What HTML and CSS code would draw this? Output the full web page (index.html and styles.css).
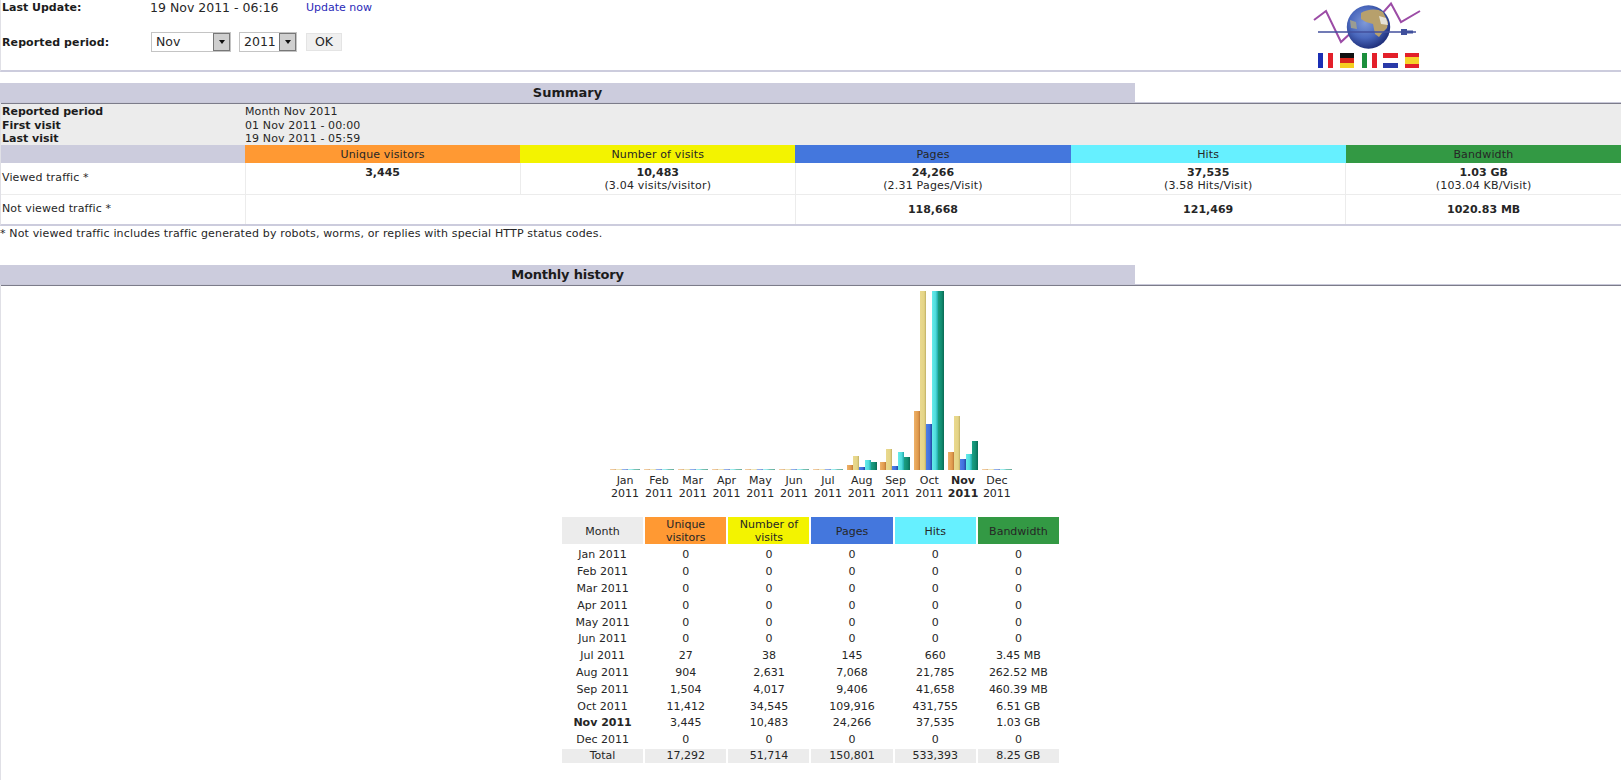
FILE: index.html
```html
<!DOCTYPE html>
<html lang="en">
<head>
<meta charset="utf-8">
<title>Statistics</title>
<link rel="stylesheet" href="styles.css">
</head>
<body>
<header class="top">
  <form class="period">
    <b class="plabel">Last Update:</b>
    <div class="pvalue">
      <span class="date">19 Nov 2011 - 06:16</span>
      <a class="update" href="#">Update now</a>
    </div>
    <b class="plabel plabel-low">Reported period:</b>
    <div class="pvalue controls">
      <span class="sel sel-month"><select><option>Nov</option></select><i class="drop"></i></span>
      <span class="sel sel-year"><select><option>2011</option></select><i class="drop"></i></span>
      <button type="button" class="ok">OK</button>
    </div>
  </form>
  <svg class="logo" width="115" height="70" viewBox="0 0 115 70" aria-hidden="true">
    <defs>
      <radialGradient id="globe" cx="0.42" cy="0.4" r="0.64">
        <stop offset="0" stop-color="#7f99d8"/>
        <stop offset="0.55" stop-color="#4a68bd"/>
        <stop offset="1" stop-color="#1b2a74"/>
      </radialGradient>
      <filter id="soft" x="-10%" y="-10%" width="120%" height="120%"><feGaussianBlur stdDeviation="0.6"/></filter>
    </defs>
    <polyline points="3,20 15,11 30,42 43,30 62,24 80,3.5 90,22 109,11" fill="none" stroke="#9c4ca6" stroke-width="2"/>
    <circle cx="57.5" cy="27" r="21.7" fill="url(#globe)"/>
    <g filter="url(#soft)">
      <path d="M50 13 C56 9 66 8 72 12 L77 22 L76 28 L71 33 L68 37 L64 34 L62 24 L55 22 L50 19 Z" fill="#b7a06c"/>
      <path d="M68 16 L75 18 L77 25 L70 24 Z" fill="#e6e2d6"/>
      <path d="M39 20 L45 22 L46 29 L40 28 Z" fill="#9a9c92"/>
    </g>
    <path d="M7 32 H96" stroke="#424f9c" stroke-width="1.6"/>
    <path d="M90 29 H96 V30.5 H102 V33.5 H96 V35 H90 Z" fill="#3f4f9c"/>
    <path d="M102 32 H105" stroke="#424f9c" stroke-width="1.5"/>
    <rect x="7" y="53" width="5" height="15" fill="#1b2fb4"/><rect x="12" y="53" width="5" height="15" fill="#fff"/><rect x="17" y="53" width="5" height="15" fill="#e3202a"/>
    <rect x="29" y="53" width="14" height="5" fill="#111"/><rect x="29" y="58" width="14" height="5" fill="#d8261c"/><rect x="29" y="63" width="14" height="5" fill="#f5cf20"/>
    <rect x="51" y="53" width="5" height="15" fill="#1c8f3c"/><rect x="56" y="53" width="5" height="15" fill="#fff"/><rect x="61" y="53" width="5" height="15" fill="#e3202a"/>
    <rect x="72" y="53" width="15" height="5" fill="#e3202a"/><rect x="72" y="58" width="15" height="5" fill="#fff"/><rect x="72" y="63" width="15" height="5" fill="#2a3aa8"/>
    <rect x="94" y="53" width="14" height="4" fill="#e3202a"/><rect x="94" y="57" width="14" height="7" fill="#f6d32a"/><rect x="94" y="64" width="14" height="4" fill="#e3202a"/>
  </svg>
</header>

<h2 class="title title-first">Summary</h2>
<section class="box">
  <table class="summary">
    <colgroup><col class="c-first"><col class="c-col"><col class="c-col"><col class="c-col"><col class="c-col"><col class="c-col"></colgroup>
    <tr class="info info-a"><th>Reported period</th><td colspan="5">Month Nov 2011</td></tr>
    <tr class="info info-b"><th>First visit</th><td colspan="5">01 Nov 2011 - 00:00</td></tr>
    <tr class="info info-c"><th>Last visit</th><td colspan="5">19 Nov 2011 - 05:59</td></tr>
    <tr class="heads">
      <td class="h-blank"></td>
      <td class="h-u">Unique visitors</td>
      <td class="h-v">Number of visits</td>
      <td class="h-p">Pages</td>
      <td class="h-h">Hits</td>
      <td class="h-b">Bandwidth</td>
    </tr>
    <tr class="data data-top">
      <td class="rowname">Viewed traffic *</td>
      <td><b>3,445</b></td>
      <td><b>10,483</b>(3.04 visits/visitor)</td>
      <td><b>24,266</b>(2.31 Pages/Visit)</td>
      <td><b>37,535</b>(3.58 Hits/Visit)</td>
      <td><b>1.03 GB</b>(103.04 KB/Visit)</td>
    </tr>
    <tr class="data data-mid">
      <td class="rowname">Not viewed traffic *</td>
      <td colspan="2"></td>
      <td><b>118,668</b></td>
      <td><b>121,469</b></td>
      <td><b>1020.83 MB</b></td>
    </tr>
  </table>
</section>
<p class="note">* Not viewed traffic includes traffic generated by robots, worms, or replies with special HTTP status codes.</p>

<h2 class="title title-second">Monthly history</h2>
<section class="box box-last">
  <div class="chart">
    <div class="month empty"><div class="bars"><i class="bar b-u" style="height:1px"></i><i class="bar b-v" style="height:1px"></i><i class="bar b-p" style="height:1px"></i><i class="bar b-h" style="height:1px"></i><i class="bar b-k" style="height:1px"></i></div><span>Jan<br>2011</span></div>
    <div class="month empty"><div class="bars"><i class="bar b-u" style="height:1px"></i><i class="bar b-v" style="height:1px"></i><i class="bar b-p" style="height:1px"></i><i class="bar b-h" style="height:1px"></i><i class="bar b-k" style="height:1px"></i></div><span>Feb<br>2011</span></div>
    <div class="month empty"><div class="bars"><i class="bar b-u" style="height:1px"></i><i class="bar b-v" style="height:1px"></i><i class="bar b-p" style="height:1px"></i><i class="bar b-h" style="height:1px"></i><i class="bar b-k" style="height:1px"></i></div><span>Mar<br>2011</span></div>
    <div class="month empty"><div class="bars"><i class="bar b-u" style="height:1px"></i><i class="bar b-v" style="height:1px"></i><i class="bar b-p" style="height:1px"></i><i class="bar b-h" style="height:1px"></i><i class="bar b-k" style="height:1px"></i></div><span>Apr<br>2011</span></div>
    <div class="month empty"><div class="bars"><i class="bar b-u" style="height:1px"></i><i class="bar b-v" style="height:1px"></i><i class="bar b-p" style="height:1px"></i><i class="bar b-h" style="height:1px"></i><i class="bar b-k" style="height:1px"></i></div><span>May<br>2011</span></div>
    <div class="month empty"><div class="bars"><i class="bar b-u" style="height:1px"></i><i class="bar b-v" style="height:1px"></i><i class="bar b-p" style="height:1px"></i><i class="bar b-h" style="height:1px"></i><i class="bar b-k" style="height:1px"></i></div><span>Jun<br>2011</span></div>
    <div class="month empty"><div class="bars"><i class="bar b-u" style="height:1px"></i><i class="bar b-v" style="height:1px"></i><i class="bar b-p" style="height:1px"></i><i class="bar b-h" style="height:1px"></i><i class="bar b-k" style="height:1px"></i></div><span>Jul<br>2011</span></div>
    <div class="month"><div class="bars"><i class="bar b-u" style="height:5px"></i><i class="bar b-v" style="height:14px"></i><i class="bar b-p" style="height:3px"></i><i class="bar b-h" style="height:10px"></i><i class="bar b-k" style="height:8px"></i></div><span>Aug<br>2011</span></div>
    <div class="month"><div class="bars"><i class="bar b-u" style="height:8px"></i><i class="bar b-v" style="height:21px"></i><i class="bar b-p" style="height:4px"></i><i class="bar b-h" style="height:18px"></i><i class="bar b-k" style="height:13px"></i></div><span>Sep<br>2011</span></div>
    <div class="month"><div class="bars"><i class="bar b-u" style="height:59px"></i><i class="bar b-v" style="height:179px"></i><i class="bar b-p" style="height:46px"></i><i class="bar b-h" style="height:179px"></i><i class="bar b-k" style="height:179px"></i></div><span>Oct<br>2011</span></div>
    <div class="month"><div class="bars"><i class="bar b-u" style="height:18px"></i><i class="bar b-v" style="height:54px"></i><i class="bar b-p" style="height:11px"></i><i class="bar b-h" style="height:16px"></i><i class="bar b-k" style="height:29px"></i></div><span><b>Nov<br>2011</b></span></div>
    <div class="month empty"><div class="bars"><i class="bar b-u" style="height:1px"></i><i class="bar b-v" style="height:1px"></i><i class="bar b-p" style="height:1px"></i><i class="bar b-h" style="height:1px"></i><i class="bar b-k" style="height:1px"></i></div><span>Dec<br>2011</span></div>
  </div>
  <table class="history">
    <thead>
      <tr>
        <th class="h-m">Month</th>
        <th class="h-u">Unique<br>visitors</th>
        <th class="h-v">Number of<br>visits</th>
        <th class="h-p">Pages</th>
        <th class="h-h">Hits</th>
        <th class="h-b">Bandwidth</th>
      </tr>
    </thead>
    <tbody>
      <tr class="first-row"><td>Jan 2011</td><td>0</td><td>0</td><td>0</td><td>0</td><td>0</td></tr>
      <tr><td>Feb 2011</td><td>0</td><td>0</td><td>0</td><td>0</td><td>0</td></tr>
      <tr><td>Mar 2011</td><td>0</td><td>0</td><td>0</td><td>0</td><td>0</td></tr>
      <tr><td>Apr 2011</td><td>0</td><td>0</td><td>0</td><td>0</td><td>0</td></tr>
      <tr><td>May 2011</td><td>0</td><td>0</td><td>0</td><td>0</td><td>0</td></tr>
      <tr class="short"><td>Jun 2011</td><td>0</td><td>0</td><td>0</td><td>0</td><td>0</td></tr>
      <tr><td>Jul 2011</td><td>27</td><td>38</td><td>145</td><td>660</td><td>3.45 MB</td></tr>
      <tr><td>Aug 2011</td><td>904</td><td>2,631</td><td>7,068</td><td>21,785</td><td>262.52 MB</td></tr>
      <tr><td>Sep 2011</td><td>1,504</td><td>4,017</td><td>9,406</td><td>41,658</td><td>460.39 MB</td></tr>
      <tr><td>Oct 2011</td><td>11,412</td><td>34,545</td><td>109,916</td><td>431,755</td><td>6.51 GB</td></tr>
      <tr class="short"><td><b>Nov 2011</b></td><td>3,445</td><td>10,483</td><td>24,266</td><td>37,535</td><td>1.03 GB</td></tr>
      <tr><td>Dec 2011</td><td>0</td><td>0</td><td>0</td><td>0</td><td>0</td></tr>
    </tbody>
    <tfoot>
      <tr><td>Total</td><td>17,292</td><td>51,714</td><td>150,801</td><td>533,393</td><td>8.25 GB</td></tr>
    </tfoot>
  </table>
</section>
</body>
</html>
```

FILE: styles.css
```css
* { box-sizing: border-box; }

html, body {
  margin: 0;
  height: 780px;
  overflow: hidden;
}

body {
  background: #fff;
  color: #262626;
  font-family: "DejaVu Sans", Verdana, sans-serif;
  font-size: 11px;
  line-height: 14px;
}

/* Top block */
.top {
  display: flex;
  height: 72px;
  border-left: 1px solid #e0e0e6;
  border-bottom: 2px solid #ccccdd;
}

.period {
  flex: 1;
  display: grid;
  grid-template-columns: 148px 1fr;
  grid-template-rows: 16px 20px;
  row-gap: 16px;
  align-items: center;
  padding-left: 1px;
}

.plabel { color: #1c1c1c; }
.plabel-low { padding-top: 2px; letter-spacing: 0.1px; }

.pvalue {
  display: flex;
  align-items: center;
  font-size: 12.5px;
}

.date { width: 156px; }

.update {
  font-size: 11px;
  color: #2a2ab8;
  text-decoration: none;
}

.controls { margin-left: 1px; }

.sel {
  display: inline-flex;
  height: 20px;
  border: 1px solid #c4c4c4;
  background: #fff;
}

.sel-month { width: 80px; margin-right: 8px; }
.sel-year { width: 58px; margin-right: 9px; }

.sel select {
  appearance: none;
  flex: 1;
  min-width: 0;
  border: 0;
  padding: 0 0 0 4px;
  background: transparent;
  color: #262626;
  font: inherit;
}

.drop {
  display: flex;
  flex: none;
  align-items: center;
  justify-content: center;
  width: 17px;
  background: #cfcfcf;
  border: 1px solid #777;
}

.drop::before {
  content: "";
  border-top: 4px solid #111;
  border-left: 3.5px solid transparent;
  border-right: 3.5px solid transparent;
}

.ok {
  width: 36px;
  height: 18px;
  padding: 0;
  border: 1px solid #e4e4e4;
  background: #f0f0f0;
  color: #262626;
  font: inherit;
}

.logo {
  flex: none;
  margin-right: 195px;
}

/* Section titles and boxes */
.title {
  width: 1135px;
  height: 19px;
  margin: 0;
  background: #ccccdd;
  color: #1c1c1c;
  font-size: 13px;
  line-height: 20px;
  text-align: center;
}

.title-first { margin-top: 11px; }
.title-second { margin-top: 24px; letter-spacing: -0.2px; }

.box {
  border-top: 1px solid #c8c8d8;
  border-left: 1px solid #e0e0e6;
  border-bottom: 2px solid #ccccdd;
  padding-top: 1px;
  box-shadow: inset 0 1px 0 #7c7c8a;
}

.box-last {
  height: 496px;
  border-bottom: 0;
}

/* Summary table */
.summary {
  width: 1620px;
  table-layout: fixed;
  border-collapse: collapse;
}

.c-first { width: 244px; }
.c-col { width: 275.2px; }

.summary th,
.summary td { padding: 0; }

.info { background: #ececec; }
.info th { padding-left: 1px; text-align: left; color: #1c1c1c; }
.info td { letter-spacing: 0.12px; }
.summary .info-a th, .summary .info-a td { height: 14.67px; padding-top: 1px; line-height: 13.67px; }
.info-b th, .info-b td { height: 14px; line-height: 14px; }
.info-c th, .info-c td { height: 12.33px; line-height: 12.33px; }

.summary .heads td {
  height: 18px;
  padding-top: 1px;
  line-height: 16px;
  text-align: center;
  letter-spacing: 0.15px;
}

.h-blank { background: #ccccdd; }
.h-m { background: #ececec; }
.h-u { background: #ff9933; }
.h-v { background: #f3f300; }
.h-p { background: #4477dd; }
.h-h { background: #66f0ff; }
.h-b { background: #339944; }

.data td {
  border-left: 1px solid #ececec;
  border-bottom: 1px solid #ececec;
  text-align: center;
}

.data b {
  display: block;
  line-height: 13px;
  letter-spacing: 0;
}

.summary .data .rowname {
  border-left: 0;
  padding-left: 1px;
  padding-top: 0;
  text-align: left;
  letter-spacing: 0.12px;
  vertical-align: middle;
}

.summary .data-top td { height: 31px; vertical-align: top; padding-top: 3px; letter-spacing: 0.2px; }
.data-mid td { height: 30px; border-bottom: 0; }

.note { margin: 0; padding-top: 1px; letter-spacing: 0.15px; }

/* Chart */
.chart {
  display: flex;
  justify-content: center;
  padding-top: 5px;
}

.month {
  flex: none;
  width: 33.8px;
  text-align: center;
  line-height: 13px;
}

.month span { display: block; padding-top: 4px; white-space: nowrap; }

.bars {
  display: flex;
  align-items: flex-end;
  justify-content: center;
  height: 179px;
}

.bar { flex: none; width: 6px; }
.empty .bar { opacity: 0.6; }

.b-u { background: linear-gradient(90deg, #eeb26a, #e09a4c 70%, #b9773a); }
.b-v { background: linear-gradient(90deg, #ead98e, #e4d486 70%, #bfae63); }
.b-p { background: linear-gradient(90deg, #4f7fe8, #4070dc 60%, #24489f); }
.b-h { background: linear-gradient(90deg, #66ecec, #4fdcdc 60%, #1fa8a8); }
.b-k { background: linear-gradient(90deg, #1ca084, #108c70 60%, #0b6a55); }

/* History table */
.history {
  width: 501px;
  margin: 17px 0 0 calc(50% - 251px);
  table-layout: fixed;
  border-collapse: separate;
  border-spacing: 2px 0;
  text-align: center;
}

.history th {
  height: 27px;
  padding: 1px 0 0;
  font-weight: normal;
  line-height: 13px;
}

.history tbody td {
  height: 17px;
  padding: 0;
  line-height: 14px;
}

.history .first-row td {
  height: 19px;
  padding-top: 3px;
}

.history .short td { height: 16px; }

.history tfoot td {
  height: 15px;
  padding: 0;
  border-top: 1px solid #fff;
  background: #ececec;
  line-height: 14px;
}
```
